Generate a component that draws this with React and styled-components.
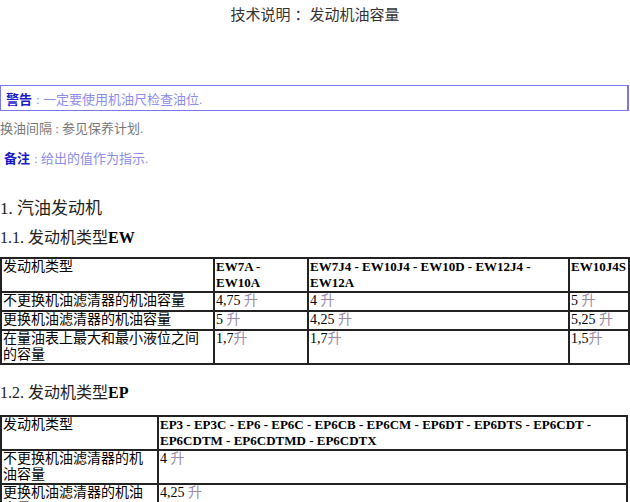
import React from "react";
import styled, { createGlobalStyle } from "styled-components";

const G = createGlobalStyle`
  body { margin: 0; background: #fff; font-family: "Liberation Serif", "Noto Sans CJK SC", serif; color: #000; }
`;
const Page = styled.div`width: 630px; overflow: hidden;`;
const Title = styled.div`
  text-align: center; font-family: "Liberation Sans", "Noto Sans CJK SC", sans-serif;
  font-size: 15px; color: #333; padding-top: 3px; height: 85px; box-sizing: border-box;
`;
const Warn = styled.div`
  border: 1px solid #7777ee; border-right-width: 2px; height: 24px; margin-right: 1px;
  display: flex; align-items: center; padding-left: 5px; font-size: 13px; color: #8c8cf0;
`;
const Label = styled.b`color: #1a1acc; margin-right: 4px;`;
const Plain = styled.div`font-size: 13px; color: #777; margin-top: 7px;`;
const Note = styled.div`font-size: 13px; color: #8c8cf0; margin-top: 11px; padding-left: 4px;`;
const H1 = styled.div`font-size: 17px; color: #222; margin-top: 27px;`;
const H2 = styled.div`font-size: 16px; color: #222; margin-top: ${p => p.$mt}px; b{font-weight:bold;color:#000;}`;
const Table = styled.table`
  border-collapse: collapse; width: 628px; font-size: 14px; margin-top: ${p => p.$mt}px; table-layout: fixed;
  td, th { border: 2px solid #222; vertical-align: top; text-align: left; padding: 0 1px; line-height: 16px; }
  th { font-weight: bold; font-size: 13px; }
`;
const Col = styled.col`width: ${p => p.$w ? p.$w + "px" : "auto"};`;
const Row = styled.tr`height: ${p => p.$h || 19}px;`;
const L = styled.span`color: #9a8ca8;`;
const V = (n) => <>{n}<L>升</L></>;

export default function App() {
  return (
    <Page>
      <G />
      <Title>技术说明 ：发动机油容量</Title>
      <Warn><Label>警告</Label>: 一定要使用机油尺检查油位.</Warn>
      <Plain>换油间隔 : 参见保养计划.</Plain>
      <Note><Label>备注</Label>: 给出的值作为指示.</Note>
      <H1>1. 汽油发动机</H1>
      <H2 $mt={5}>1.1. 发动机类型<b>EW</b></H2>
      <Table $mt={9}>
        <colgroup><Col $w={213}/><Col $w={94}/><Col $w={261}/><Col $w={60}/></colgroup>
        <tbody>
          <Row $h={33}><td>发动机类型</td><th>EW7A - EW10A</th><th>EW7J4 - EW10J4 - EW10D - EW12J4 - EW12A</th><th>EW10J4S</th></Row>
          <Row><td>不更换机油滤清器的机油容量</td><td>{V("4,75 ")}</td><td>{V("4 ")}</td><td>{V("5 ")}</td></Row>
          <Row><td>更换机油滤清器的机油容量</td><td>{V("5 ")}</td><td>{V("4,25 ")}</td><td>{V("5,25 ")}</td></Row>
          <Row $h={34}><td>在量油表上最大和最小液位之间的容量</td><td>{V("1,7")}</td><td>{V("1,7")}</td><td>{V("1,5")}</td></Row>
        </tbody>
      </Table>
      <H2 $mt={14}>1.2. 发动机类型<b>EP</b></H2>
      <Table $mt={12}>
        <colgroup><Col $w={157}/><Col/></colgroup>
        <tbody>
          <Row $h={33}><td>发动机类型</td><th>EP3 - EP3C - EP6 - EP6C - EP6CB - EP6CM - EP6DT - EP6DTS - EP6CDT - EP6CDTM - EP6CDTMD - EP6CDTX</th></Row>
          <Row $h={34}><td>不更换机油滤清器的机油容量</td><td>{V("4 ")}</td></Row>
          <Row $h={34}><td>更换机油滤清器的机油容量</td><td>{V("4,25 ")}</td></Row>
        </tbody>
      </Table>
    </Page>
  );
}
